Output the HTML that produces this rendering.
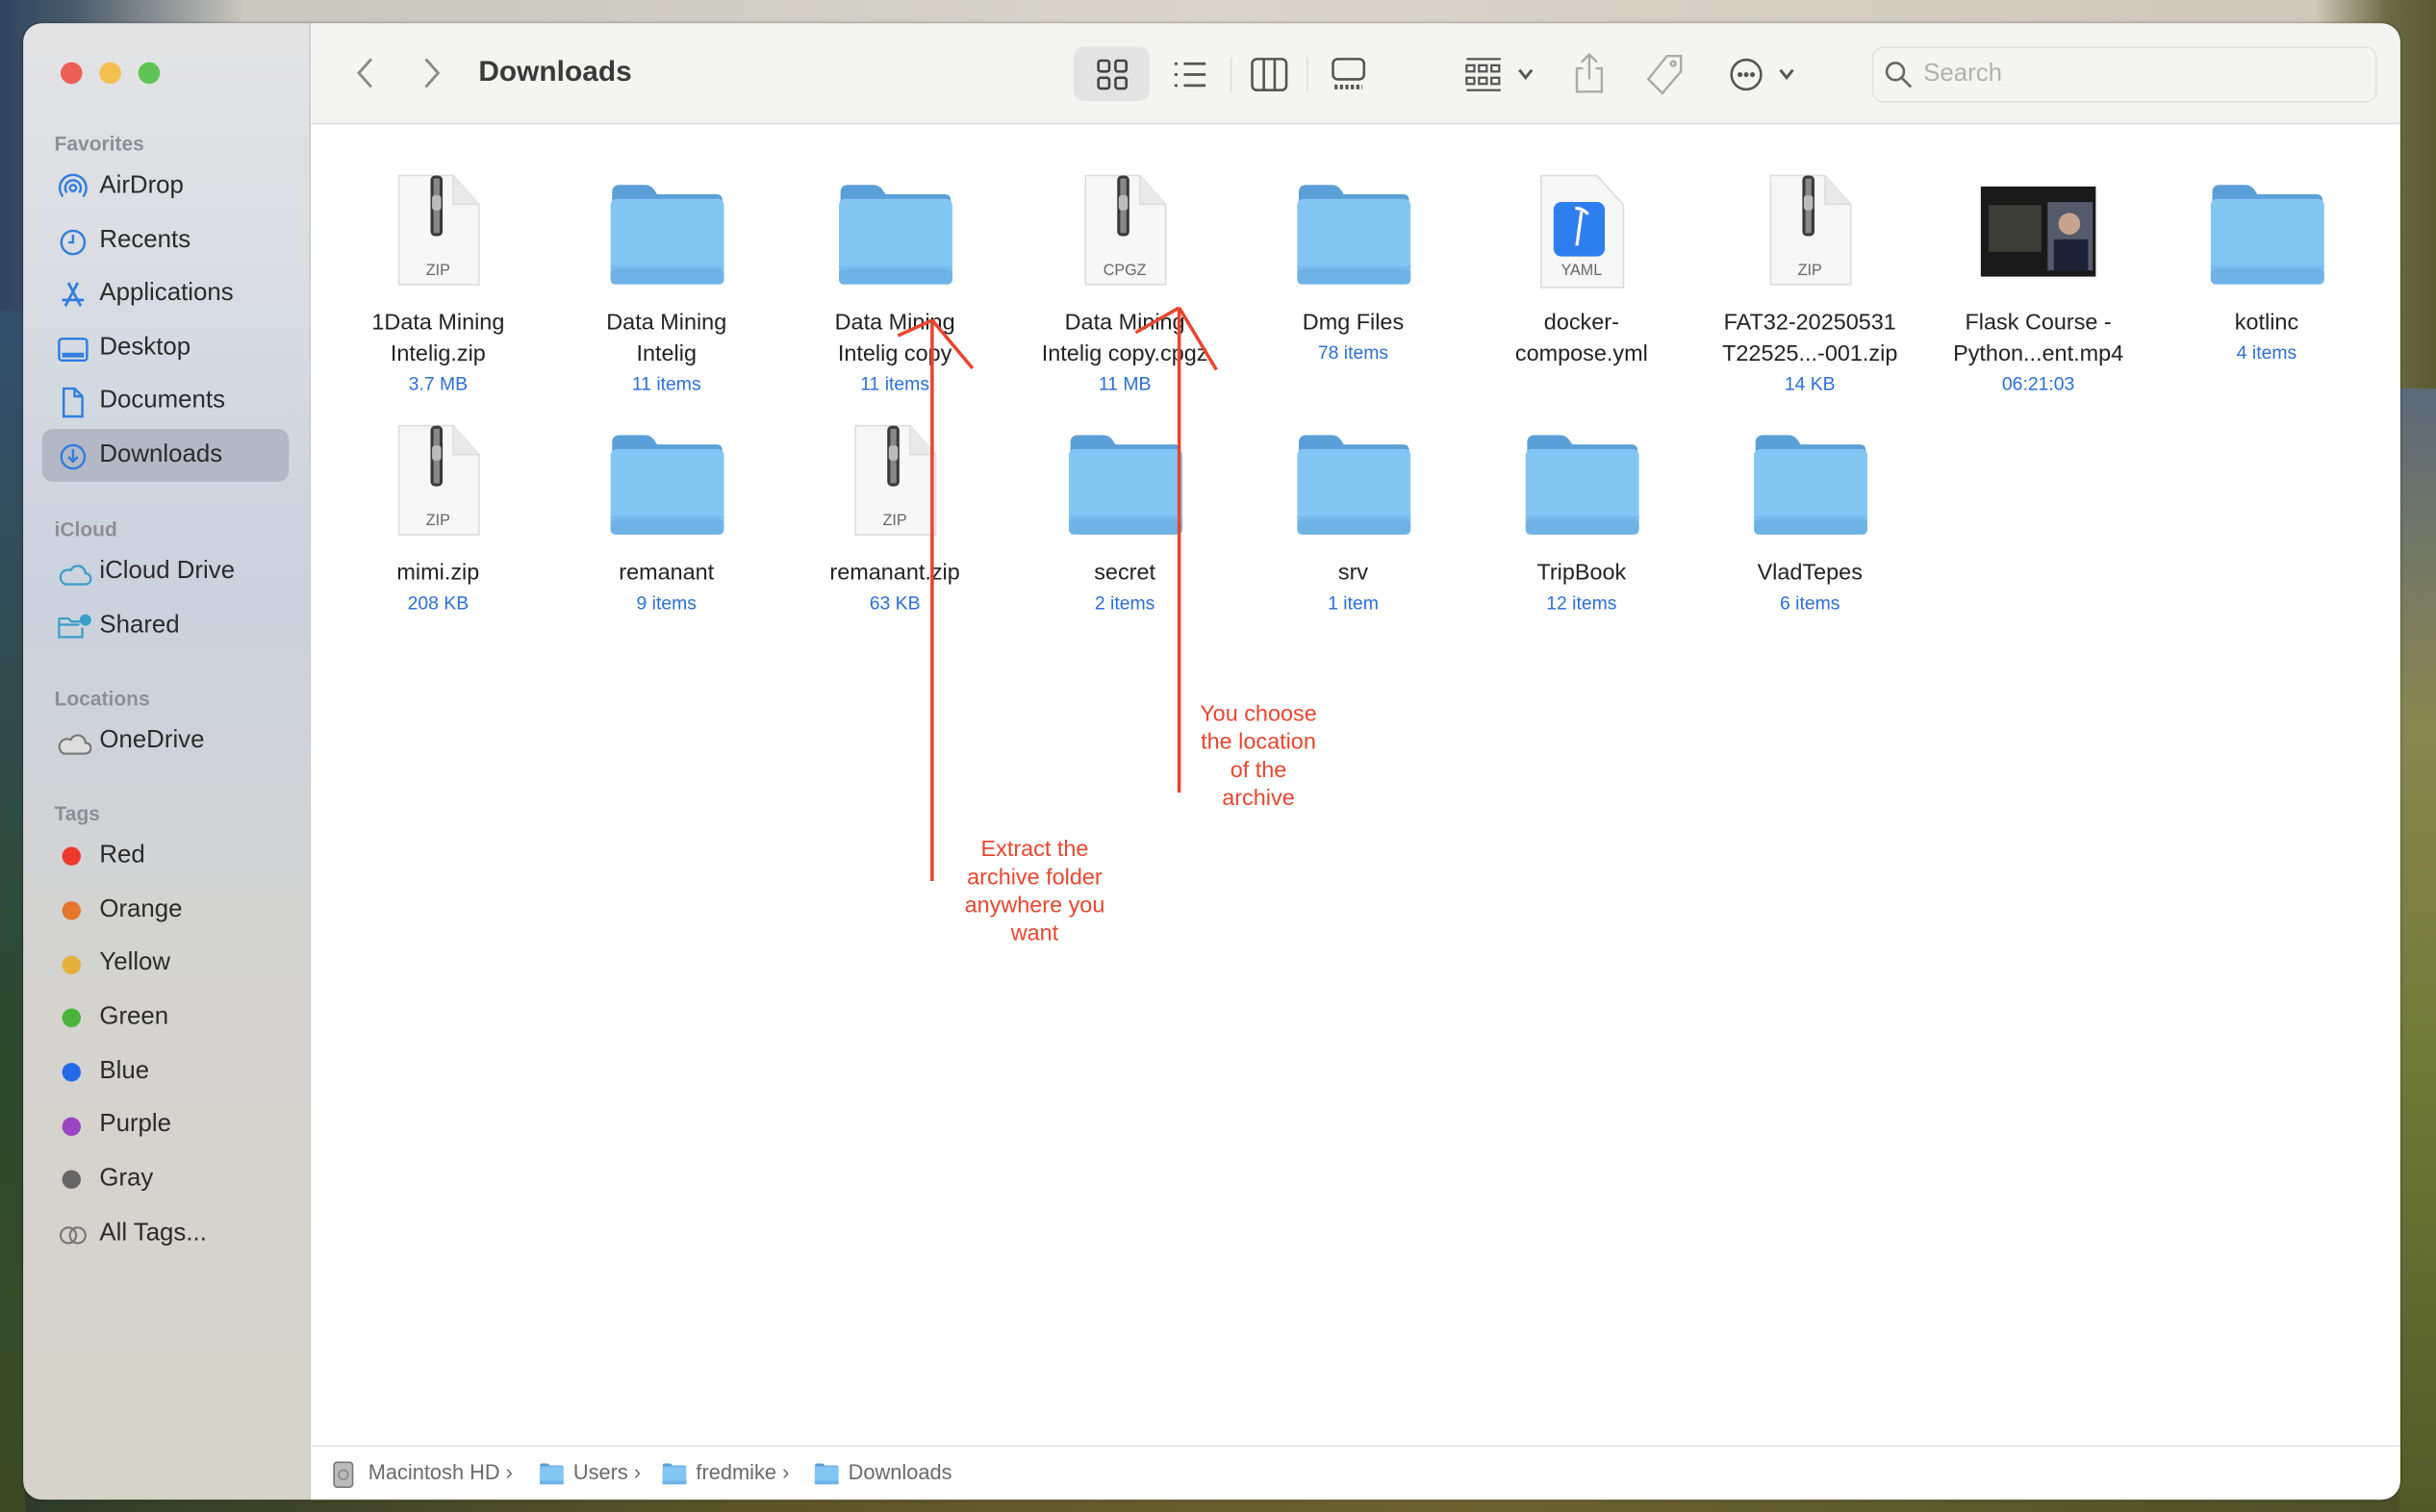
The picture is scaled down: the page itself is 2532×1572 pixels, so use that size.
<!DOCTYPE html>
<html><head><meta charset="utf-8"><style>
html,body{margin:0;padding:0;width:2532px;height:1572px;overflow:hidden}
#s{position:absolute;left:0;top:0;width:1568px;height:973px;transform:scale(1.61480,1.61563);transform-origin:0 0;font-family:"Liberation Sans",sans-serif;
background:linear-gradient(90deg,#2f4560 0%,#4a5a6a 3%,#c9c7be 10%,#d8d4ca 50%,#cfc9bb 95%,#6f6a44 98%,#5a5a30 100%)}
#bgb{position:absolute;left:0;right:0;bottom:0;height:30px;background:linear-gradient(90deg,#2c3a2a,#5a5428 30%,#6b6230 60%,#4d5028)}
#bgl{position:absolute;left:0;top:200px;width:16px;height:773px;background:linear-gradient(#324f6e,#2e4a30 60%,#3c4a22)}
#bgr{position:absolute;right:0;top:250px;width:24px;height:723px;background:linear-gradient(#5d6a7a,#8a8650 30%,#6f7a38 60%,#525a28)}
#win{position:absolute;left:15px;top:15px;width:1530px;height:950px;border-radius:12px;overflow:hidden;background:#fff;box-shadow:0 0 2px rgba(0,0,0,.4)}
#side{position:absolute;left:0;top:0;width:184px;height:950px;background:linear-gradient(180deg,#e4e4e4 0%,#d7dbe2 20%,#cbd2de 38%,#d3d3d2 60%,#d6d3c8 100%);border-right:1px solid #c8c8c8}
.dot{position:absolute;top:25px;width:14px;height:14px;border-radius:50%}
.hd{position:absolute;left:20px;font-size:13px;font-weight:bold;color:#8d8f94}
.it{position:absolute;left:49px;font-size:16px;color:#2b2b2b}
.ic{position:absolute;left:22px}
.tg{position:absolute;left:25px;width:12px;height:12px;border-radius:50%}
#tb{position:absolute;left:185px;top:0;right:0;height:64px;background:#f4f4f3;border-bottom:1px solid #dedede}
#pb{position:absolute;left:185px;right:0;top:915px;height:35px;background:#fff;border-top:1px solid #e2e2e2;font-size:13.5px;color:#6a6a6a}
.f{position:absolute;width:140px;text-align:center;font-size:14.5px;line-height:20px;color:#222}
.f .sub{font-size:12px;line-height:18px;color:#2a6fd8}
.f svg{display:block;margin:0 auto 12px}
.ann{position:absolute;color:#e8462f;font-size:14.5px;line-height:18px;text-align:center}
</style></head><body><div id="s">
<div id="bgb"></div><div id="bgl"></div><div id="bgr"></div>
<svg width="0" height="0" style="position:absolute"><defs>
<symbol id="fold" viewBox="0 0 76 66"><path d="M3 6 Q3 1 8 1 H24 Q28 1 30 4 L32 7 H70 Q74 7 74 11 V20 H3Z" fill="#5b9fd8"/><rect x="2" y="10" width="73" height="55" rx="4" fill="#84c6f3"/><rect x="2" y="55" width="73" height="10" rx="3" fill="#6fb3e6"/><rect x="2" y="53" width="73" height="2" fill="#78bbec"/></symbol>
<symbol id="zip" viewBox="0 0 60 76"><path d="M4 1 H40 L57 20 V73 H4Z" fill="#f7f7f7" stroke="#dcdcdc"/><path d="M40 1 V20 H57" fill="#e9e9e9" stroke="#dcdcdc"/><rect x="25" y="1" width="8" height="40" rx="3" fill="#3a3a3a"/><rect x="27" y="3" width="4" height="36" fill="#888"/><rect x="26" y="14" width="6" height="10" rx="2" fill="#bbb"/></symbol>
</defs></svg>
<div id="win">
<div id="side">
<div class="dot" style="left:24px;background:#ec5f57"></div><div class="dot" style="left:49px;background:#f4bf4f"></div><div class="dot" style="left:74px;background:#5fc454"></div>
<div class="hd" style="top:70px">Favorites</div>
<div style="position:absolute;left:12px;top:261px;width:159px;height:34px;border-radius:7px;background:#b3b8c6"></div>
<svg class="ic" style="top:96px" width="20" height="20" viewBox="0 0 20 20" fill="none" stroke="#2f7de0" stroke-width="1.5"><circle cx="10" cy="10" r="2"/><path d="M6 13a5 5 0 1 1 8 0M3.5 15.5a8.5 8.5 0 1 1 13 0"/></svg>
<div class="it" style="top:96px">AirDrop</div>
<svg class="ic" style="top:131px" width="20" height="20" viewBox="0 0 20 20" fill="none" stroke="#2f7de0" stroke-width="1.5"><circle cx="10" cy="10" r="7.5"/><path d="M10 5v5H7"/></svg>
<div class="it" style="top:131px">Recents</div>
<svg class="ic" style="top:165px" width="20" height="20" viewBox="0 0 20 20" fill="none" stroke="#2f7de0" stroke-width="1.7"><path d="M7 2l8 15M13 2L5 17M3 13h14"/></svg>
<div class="it" style="top:165px">Applications</div>
<svg class="ic" style="top:200px" width="20" height="20" viewBox="0 0 20 20" fill="none" stroke="#2f7de0" stroke-width="1.5"><rect x="1" y="3" width="18" height="14" rx="2"/><rect x="3" y="12" width="14" height="3" fill="#2f7de0" stroke="none"/></svg>
<div class="it" style="top:200px">Desktop</div>
<svg class="ic" style="top:234px" width="20" height="20" viewBox="0 0 20 20" fill="none" stroke="#2f7de0" stroke-width="1.5"><path d="M4 1h7l5 5v13H4z M11 1v5h5"/></svg>
<div class="it" style="top:234px">Documents</div>
<svg class="ic" style="top:269px" width="20" height="20" viewBox="0 0 20 20" fill="none" stroke="#2f7de0" stroke-width="1.5"><circle cx="10" cy="10" r="7.5"/><path d="M10 5v8M7 10l3 3 3-3"/></svg>
<div class="it" style="top:269px">Downloads</div>
<div class="hd" style="top:318px">iCloud</div>
<svg class="ic" style="top:346px" width="22" height="18" viewBox="0 0 22 18" fill="none" stroke="#3a9ec8" stroke-width="1.4"><path d="M5 15h13a3.5 3.5 0 0 0 0-7 5 5 0 0 0-9.5-2A4.5 4.5 0 0 0 5 15z"/></svg>
<div class="it" style="top:344px">iCloud Drive</div>
<svg class="ic" style="top:380px" width="22" height="18" viewBox="0 0 22 18" fill="none" stroke="#3a9ec8" stroke-width="1.4"><path d="M1 3h6l2 2h6M1 3v12h15V9M1 7h13"/><circle cx="18" cy="4" r="3" fill="#3a9ec8"/></svg>
<div class="it" style="top:379px">Shared</div>
<div class="hd" style="top:427px">Locations</div>
<svg class="ic" style="top:455px" width="22" height="18" viewBox="0 0 22 18" fill="#ddd" stroke="#777" stroke-width="1.3"><path d="M4 15h14a3.5 3.5 0 0 0 0-7 5 5 0 0 0-9.5-2A4.5 4.5 0 0 0 4 15z"/></svg>
<div class="it" style="top:453px">OneDrive</div>
<div class="hd" style="top:501px">Tags</div>
<div class="tg" style="top:530px;background:#ed3a2c"></div><div class="it" style="top:527px">Red</div>
<div class="tg" style="top:565px;background:#e5762e"></div><div class="it" style="top:562px">Orange</div>
<div class="tg" style="top:600px;background:#e4b13a"></div><div class="it" style="top:596px">Yellow</div>
<div class="tg" style="top:634px;background:#49b33a"></div><div class="it" style="top:631px">Green</div>
<div class="tg" style="top:669px;background:#2469e6"></div><div class="it" style="top:666px">Blue</div>
<div class="tg" style="top:704px;background:#9b45c1"></div><div class="it" style="top:700px">Purple</div>
<div class="tg" style="top:738px;background:#666"></div><div class="it" style="top:735px">Gray</div>
<svg class="ic" style="top:773px" width="22" height="14" viewBox="0 0 22 14" fill="none" stroke="#777" stroke-width="1.3"><circle cx="7" cy="7" r="5"/><circle cx="13" cy="7" r="5"/></svg>
<div class="it" style="top:770px">All Tags...</div>
</div>
<div id="tb">
<svg style="position:absolute;left:28px;top:21px" width="14" height="22" viewBox="0 0 14 22" fill="none" stroke="#8a8a8a" stroke-width="1.8"><path d="M11 2L3 11l8 9"/></svg>
<svg style="position:absolute;left:71px;top:21px" width="14" height="22" viewBox="0 0 14 22" fill="none" stroke="#8a8a8a" stroke-width="1.8"><path d="M3 2l8 9-8 9"/></svg>
<div style="position:absolute;left:108px;top:20px;font-size:18.5px;font-weight:bold;color:#3a3a3a">Downloads</div>
<div style="position:absolute;left:491px;top:15px;width:49px;height:35px;border-radius:7px;background:#e3e3e3"></div>
<svg style="position:absolute;left:506px;top:23px" width="20" height="20" viewBox="0 0 20 20" fill="none" stroke="#444" stroke-width="1.6"><rect x="1" y="1" width="7" height="7" rx="1.5"/><rect x="12" y="1" width="7" height="7" rx="1.5"/><rect x="1" y="12" width="7" height="7" rx="1.5"/><rect x="12" y="12" width="7" height="7" rx="1.5"/></svg>
<svg style="position:absolute;left:555px;top:24px" width="22" height="18" viewBox="0 0 22 18" fill="none" stroke="#555" stroke-width="1.7"><path d="M7 2h14M7 9h14M7 16h14M1 2h2M1 9h2M1 16h2"/></svg>
<div style="position:absolute;left:592px;top:22px;width:1px;height:22px;background:#ddd"></div>
<svg style="position:absolute;left:605px;top:22px" width="24" height="22" viewBox="0 0 24 22" fill="none" stroke="#555" stroke-width="1.6"><rect x="1" y="1" width="22" height="20" rx="3"/><path d="M8.5 1v20M15.5 1v20"/></svg>
<div style="position:absolute;left:641px;top:22px;width:1px;height:22px;background:#ddd"></div>
<svg style="position:absolute;left:656px;top:22px" width="24" height="22" viewBox="0 0 24 22" fill="none" stroke="#555" stroke-width="1.6"><rect x="2" y="1" width="20" height="13" rx="3"/><path d="M3 19h18" stroke-dasharray="2 1.5" stroke-width="3"/></svg>
<svg style="position:absolute;left:743px;top:22px" width="24" height="22" viewBox="0 0 24 22" fill="none" stroke="#555" stroke-width="1.4"><path d="M1 1h22M1 21h22"/><rect x="1" y="5" width="5" height="4"/><rect x="9" y="5" width="5" height="4"/><rect x="17" y="5" width="5" height="4"/><rect x="1" y="13" width="5" height="4"/><rect x="9" y="13" width="5" height="4"/><rect x="17" y="13" width="5" height="4"/></svg>
<svg style="position:absolute;left:776px;top:28px" width="12" height="10" viewBox="0 0 12 10" fill="none" stroke="#555" stroke-width="1.8"><path d="M2 2l4 5 4-5"/></svg>
<svg style="position:absolute;left:813px;top:18px" width="20" height="28" viewBox="0 0 20 28" fill="none" stroke="#aaa" stroke-width="1.5"><path d="M10 2v16M5 7l5-5 5 5M6 11H2v15h16V11h-4"/></svg>
<svg style="position:absolute;left:859px;top:19px" width="26" height="28" viewBox="0 0 26 28" fill="none" stroke="#aaa" stroke-width="1.5"><path d="M14 2h9v10L11 26 2 17z"/><circle cx="18" cy="7" r="1.5"/></svg>
<svg style="position:absolute;left:913px;top:22px" width="22" height="22" viewBox="0 0 22 22" fill="none" stroke="#555" stroke-width="1.6"><circle cx="11" cy="11" r="9.5"/><circle cx="7" cy="11" r=".8" fill="#555"/><circle cx="11" cy="11" r=".8" fill="#555"/><circle cx="15" cy="11" r=".8" fill="#555"/></svg>
<svg style="position:absolute;left:944px;top:28px" width="12" height="10" viewBox="0 0 12 10" fill="none" stroke="#555" stroke-width="1.8"><path d="M2 2l4 5 4-5"/></svg>
<div style="position:absolute;left:1005px;top:15px;width:323px;height:34px;border:1px solid #e1e1e1;border-radius:7px;background:#f4f4f3"></div>
<svg style="position:absolute;left:1013px;top:24px" width="18" height="18" viewBox="0 0 18 18" fill="none" stroke="#666" stroke-width="1.6"><circle cx="7" cy="7" r="5.5"/><path d="M11 11l6 6"/></svg>
<div style="position:absolute;left:1038px;top:24px;font-size:16px;color:#b0b0b0">Search</div>
</div>
<div id="pb">
<svg style="position:absolute;left:14px;top:9px" width="14" height="18" viewBox="0 0 14 18"><rect x="1" y="1" width="12" height="16" rx="2" fill="#bbb" stroke="#777"/><circle cx="7" cy="9" r="3" fill="none" stroke="#888"/></svg>
<span style="position:absolute;left:37px;top:9px">Macintosh HD ›</span>
<svg style="position:absolute;left:147px;top:10px" width="16" height="15" viewBox="0 0 76 66"><use href="#fold"/></svg>
<span style="position:absolute;left:169px;top:9px">Users ›</span>
<svg style="position:absolute;left:226px;top:10px" width="16" height="15" viewBox="0 0 76 66"><use href="#fold"/></svg>
<span style="position:absolute;left:248px;top:9px">fredmike ›</span>
<svg style="position:absolute;left:324px;top:10px" width="16" height="15" viewBox="0 0 76 66"><use href="#fold"/></svg>
<span style="position:absolute;left:346px;top:9px">Downloads</span>
</div>
</div>
<!-- items, page coords -->
<div class="f" style="left:212px;top:112px"><svg width="60" height="74"><use href="#zip"/><text x="30" y="65" font-size="10" fill="#666" text-anchor="middle" font-family="Liberation Sans">ZIP</text></svg>1Data Mining<br>Intelig.zip<div class="sub">3.7 MB</div></div>
<div class="f" style="left:359px;top:116px"><svg width="76" height="70" viewBox="0 0 76 66"><use href="#fold"/></svg>Data Mining<br>Intelig<div class="sub">11 items</div></div>
<div class="f" style="left:506px;top:116px"><svg width="76" height="70" viewBox="0 0 76 66"><use href="#fold"/></svg>Data Mining<br>Intelig copy<div class="sub">11 items</div></div>
<div class="f" style="left:654px;top:112px"><svg width="60" height="74"><use href="#zip"/><text x="30" y="65" font-size="10" fill="#666" text-anchor="middle" font-family="Liberation Sans">CPGZ</text></svg>Data Mining<br>Intelig copy.cpgz<div class="sub">11 MB</div></div>
<div class="f" style="left:801px;top:116px"><svg width="76" height="70" viewBox="0 0 76 66"><use href="#fold"/></svg>Dmg Files<div class="sub">78 items</div></div>
<div class="f" style="left:948px;top:112px"><svg width="60" height="74"><path d="M4 1H40L57 20V73H4Z" fill="#f7f7f7" stroke="#dcdcdc"/><rect x="12" y="18" width="33" height="35" rx="5" fill="#2f7ef0"/><path d="M26 22c4 0 7 2 8 4M30 24l-3 22" stroke="#fff" stroke-width="2" fill="none"/><text x="30" y="65" font-size="10" fill="#666" text-anchor="middle" font-family="Liberation Sans">YAML</text></svg>docker-<br>compose.yml</div>
<div class="f" style="left:1095px;top:112px"><svg width="60" height="74"><use href="#zip"/><text x="30" y="65" font-size="10" fill="#666" text-anchor="middle" font-family="Liberation Sans">ZIP</text></svg>FAT32-20250531<br>T22525...-001.zip<div class="sub">14 KB</div></div>
<div class="f" style="left:1242px;top:112px"><svg width="76" height="74"><rect x="1" y="8" width="74" height="58" fill="#1a1a1a"/><rect x="6" y="20" width="34" height="30" fill="#3b3d36"/><rect x="44" y="18" width="29" height="44" fill="#555a6a"/><circle cx="58" cy="32" r="7" fill="#c8a490"/><rect x="48" y="42" width="22" height="20" fill="#1e2236"/></svg>Flask Course -<br>Python...ent.mp4<div class="sub">06:21:03</div></div>
<div class="f" style="left:1389px;top:116px"><svg width="76" height="70" viewBox="0 0 76 66"><use href="#fold"/></svg>kotlinc<div class="sub">4 items</div></div>
<div class="f" style="left:212px;top:273px"><svg width="60" height="74"><use href="#zip"/><text x="30" y="65" font-size="10" fill="#666" text-anchor="middle" font-family="Liberation Sans">ZIP</text></svg>mimi.zip<div class="sub">208 KB</div></div>
<div class="f" style="left:359px;top:277px"><svg width="76" height="70" viewBox="0 0 76 66"><use href="#fold"/></svg>remanant<div class="sub">9 items</div></div>
<div class="f" style="left:506px;top:273px"><svg width="60" height="74"><use href="#zip"/><text x="30" y="65" font-size="10" fill="#666" text-anchor="middle" font-family="Liberation Sans">ZIP</text></svg>remanant.zip<div class="sub">63 KB</div></div>
<div class="f" style="left:654px;top:277px"><svg width="76" height="70" viewBox="0 0 76 66"><use href="#fold"/></svg>secret<div class="sub">2 items</div></div>
<div class="f" style="left:801px;top:277px"><svg width="76" height="70" viewBox="0 0 76 66"><use href="#fold"/></svg>srv<div class="sub">1 item</div></div>
<div class="f" style="left:948px;top:277px"><svg width="76" height="70" viewBox="0 0 76 66"><use href="#fold"/></svg>TripBook<div class="sub">12 items</div></div>
<div class="f" style="left:1095px;top:277px"><svg width="76" height="70" viewBox="0 0 76 66"><use href="#fold"/></svg>VladTepes<div class="sub">6 items</div></div>
<svg style="position:absolute;left:0;top:0" width="1568" height="973" fill="none" stroke="#e8462f" stroke-width="2.2"><path d="M600 567V206M600 206l-22 10M600 206l26 31M759 510V198M759 198l-28 16M759 198l24 40"/></svg>
<div class="ann" style="left:606px;top:538px;width:120px">Extract the<br>archive folder<br>anywhere you<br>want</div>
<div class="ann" style="left:760px;top:451px;width:100px">You choose<br>the location<br>of the<br>archive</div>
</div></body></html>
